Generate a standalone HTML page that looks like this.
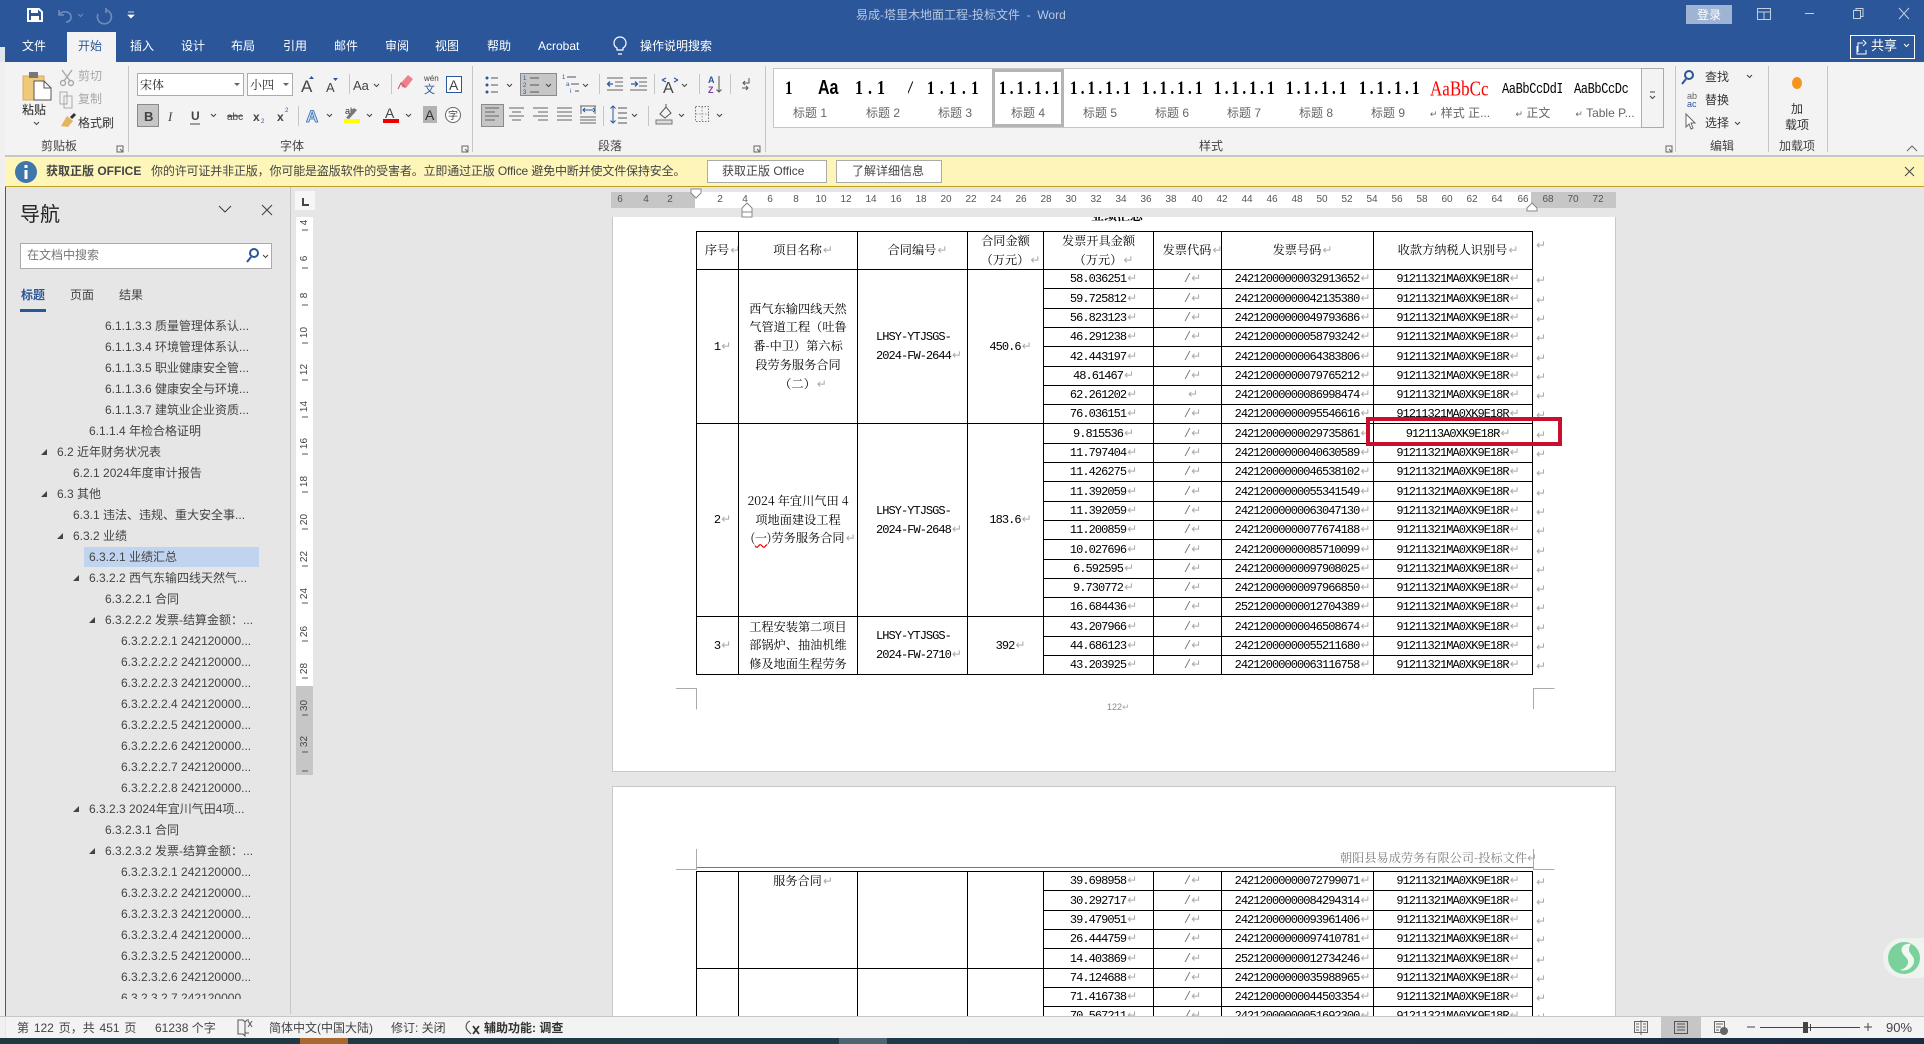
<!DOCTYPE html>
<html lang="zh"><head><meta charset="utf-8"><title>Word</title>
<style>
html,body{margin:0;padding:0;width:1924px;height:1044px;overflow:hidden;background:#e6e6e6}
body{position:relative;font:12px/14px "Liberation Sans","Noto Sans CJK SC",sans-serif;color:#444}
div,span.t{position:absolute}
.t{position:absolute;white-space:nowrap;line-height:14px}
.w{color:#fff}
.n{position:absolute;white-space:nowrap;line-height:16px;color:#444;font-size:12px}
.a{position:absolute;width:0;height:0;border-left:6px solid transparent;border-bottom:6px solid #444}
.r{position:absolute;left:0;top:0;font-size:10px;color:#555;line-height:10px;width:16px;text-align:center}
.v{position:absolute;left:296px;width:17px;text-align:center;font-size:10px;line-height:9px;color:#444;transform:rotate(-90deg)}
.s{position:absolute;white-space:nowrap;overflow:hidden;height:20px;line-height:20px;font:bold 15px/20px "Liberation Serif",serif;color:#000;letter-spacing:3.2px;transform:scaleY(1.25)}
.l{position:absolute;white-space:nowrap;top:106px;line-height:14px;color:#666;text-align:center;width:72px}
table{border-collapse:collapse;table-layout:fixed;position:absolute;background:#fff}
td{border:1px solid #000;padding:1px 0 0;text-align:center;vertical-align:middle;font:12px/15px "Liberation Mono","Noto Serif CJK SC",monospace;letter-spacing:-.96px;color:#000;overflow:hidden;white-space:nowrap}
td.c{font:12.2px/18.7px "Noto Serif CJK SC","Liberation Serif",serif;color:#000;letter-spacing:0;padding:0}
td.h{line-height:18.4px}
td.f{line-height:18.3px}
td.x{text-align:left;padding-left:18px;line-height:19px}
td.e{border:none;text-align:left;padding-left:2px;background:#fff}
td.e i{position:relative;top:2px}
td i{display:inline-block;width:0;overflow:visible;margin-left:1px;font:normal 12px/10px "DejaVu Sans",sans-serif;color:#aaa;letter-spacing:0}
.mk{font:normal 12px/10px "DejaVu Sans",sans-serif;color:#aaa;letter-spacing:0}
td.g{color:#777}
.sep{position:absolute;width:1px;background:#c6c6c6}
.b{position:absolute;background:#fff;border:1px solid #ababab;box-sizing:border-box}
</style></head><body>

<!-- chrome -->
<div style="left:0;top:47px;width:5px;height:991px;background:#f0f0f0"></div>
<div style="left:5px;top:187px;width:1px;height:829px;background:#3d5d80"></div>
<div style="left:0;top:0;width:1924px;height:62px;background:#2b579a"></div>
<div style="left:0;top:47px;width:5px;height:15px;background:#dfe6ee"></div>
<div style="left:67px;top:32px;width:49px;height:30px;background:#f3f3f3"></div>
<div style="left:5px;top:62px;width:1919px;height:95px;background:#f3f3f3"></div>
<div style="left:5px;top:155px;width:1919px;height:2px;background:#c6c6c6"></div>
<div style="left:5px;top:157px;width:1919px;height:29px;background:#fdf6b8"></div>
<div style="left:5px;top:186px;width:1919px;height:1px;background:#c0a020"></div>

<!-- title -->
<span class="t" style="left:856px;top:8px;color:#b9c7df">易成-塔里木地面工程-投标文件&nbsp; -&nbsp; Word</span>
<div style="left:1686px;top:5px;width:46px;height:19px;background:#9fb4d2"></div>
<span class="t w" style="left:1697px;top:8px">登录</span>
<span class="t w" style="left:22px;top:39px">文件</span>
<span class="t" style="left:78px;top:39px;color:#2b579a">开始</span>
<span class="t w" style="left:130px;top:39px">插入</span>
<span class="t w" style="left:181px;top:39px">设计</span>
<span class="t w" style="left:231px;top:39px">布局</span>
<span class="t w" style="left:283px;top:39px">引用</span>
<span class="t w" style="left:334px;top:39px">邮件</span>
<span class="t w" style="left:385px;top:39px">审阅</span>
<span class="t w" style="left:435px;top:39px">视图</span>
<span class="t w" style="left:487px;top:39px">帮助</span>
<span class="t w" style="left:538px;top:39px">Acrobat</span>
<span class="t w" style="left:640px;top:39px">操作说明搜索</span>
<div style="left:1850px;top:35px;width:63px;height:22px;border:1px solid #fff"></div>
<span class="t w" style="left:1871px;top:39px;font-size:13px">共享</span>

<!-- ribbon text -->
<span class="t" style="left:22px;top:103px;color:#222">粘贴</span>
<span class="t" style="left:78px;top:69px;color:#a8a8a8">剪切</span>
<span class="t" style="left:78px;top:92px;color:#a8a8a8">复制</span>
<span class="t" style="left:78px;top:116px;color:#333">格式刷</span>
<span class="t" style="left:41px;top:139px">剪贴板</span>
<span class="t" style="left:280px;top:139px">字体</span>
<span class="t" style="left:598px;top:139px">段落</span>
<span class="t" style="left:1199px;top:139px">样式</span>
<span class="t" style="left:1710px;top:139px">编辑</span>
<span class="t" style="left:1779px;top:139px">加载项</span>
<div class="b" style="left:137px;top:73px;width:107px;height:23px"></div>
<span class="t" style="left:140px;top:78px;color:#222;font-family:'Noto Serif CJK SC',serif">宋体</span>
<div class="b" style="left:247px;top:73px;width:46px;height:23px"></div>
<span class="t" style="left:250px;top:78px;color:#222;font-family:'Noto Serif CJK SC',serif">小四</span>
<div style="left:137px;top:104px;width:22px;height:23px;background:#c6c6c6;border:1px solid #8a8a8a;box-sizing:border-box"></div>
<div style="left:520px;top:73px;width:37px;height:23px;background:#c6c6c6;border:1px solid #8a8a8a;box-sizing:border-box"></div>
<div style="left:481px;top:104px;width:23px;height:23px;background:#c6c6c6;border:1px solid #8a8a8a;box-sizing:border-box"></div>
<div class="sep" style="left:128px;top:66px;height:86px"></div>
<div class="sep" style="left:472px;top:66px;height:86px"></div>
<div class="sep" style="left:765px;top:66px;height:86px"></div>
<div class="sep" style="left:1675px;top:66px;height:86px"></div>
<div class="sep" style="left:1768px;top:66px;height:86px"></div>
<div class="sep" style="left:1827px;top:66px;height:86px"></div>
<div class="sep" style="left:298px;top:106px;height:20px"></div>
<div class="sep" style="left:349px;top:74px;height:20px"></div>
<div class="sep" style="left:391px;top:74px;height:20px"></div>
<div class="sep" style="left:599px;top:74px;height:20px"></div>
<div class="sep" style="left:654px;top:74px;height:20px"></div>
<div class="sep" style="left:699px;top:74px;height:20px"></div>
<div class="sep" style="left:730px;top:74px;height:20px"></div>
<div class="sep" style="left:603px;top:106px;height:20px"></div>
<div class="sep" style="left:648px;top:106px;height:20px"></div>

<!-- styles gallery -->
<div style="left:773px;top:68px;width:891px;height:60px;background:#fff;border:1px solid #c6c6c6;box-sizing:border-box"></div>
<div style="left:1641px;top:68px;width:23px;height:60px;background:#f3f3f3;border:1px solid #ababab;box-sizing:border-box"></div>
<div style="left:992px;top:69px;width:72px;height:58px;border:3px solid #b4b4b4;box-sizing:border-box"></div>
<span class="s" style="left:785px;top:79px;width:12px">1</span>
<span class="s" style="left:818px;top:79px;width:30px;font-size:16px;letter-spacing:0;font-family:'Liberation Sans',sans-serif">Aa</span>
<span class="s" style="left:855px;top:79px;width:34px;letter-spacing:5px;font-size:16px">1.1</span>
<span class="s" style="left:908px;top:79px;width:8px;font-style:italic">/</span>
<span class="s" style="left:927px;top:79px;width:56px;letter-spacing:5.400px">1.1.1</span>
<span class="s" style="left:999px;top:79px;width:60px">1.1.1.1</span>
<span class="s" style="left:1070px;top:79px;width:60px">1.1.1.1</span>
<span class="s" style="left:1142px;top:79px;width:60px">1.1.1.1</span>
<span class="s" style="left:1214px;top:79px;width:60px">1.1.1.1</span>
<span class="s" style="left:1286px;top:79px;width:60px">1.1.1.1</span>
<span class="s" style="left:1359px;top:79px;width:60px">1.1.1.1</span>
<span class="s" style="left:1430px;top:79px;width:59px;color:#f00;font-weight:normal;font-size:17px;letter-spacing:0">AaBbCc</span>
<span class="s" style="left:1502px;top:79px;width:60px;font-size:12px;font-weight:normal;font-family:'Liberation Mono',monospace;letter-spacing:-.4px">AaBbCcDdI</span>
<span class="s" style="left:1574px;top:79px;width:60px;font-size:12px;letter-spacing:-.4px;font-weight:normal;font-family:'Liberation Mono',monospace">AaBbCcDc</span>
<span class="l" style="left:774px">标题 1</span>
<span class="l" style="left:847px">标题 2</span>
<span class="l" style="left:919px">标题 3</span>
<span class="l" style="left:992px">标题 4</span>
<span class="l" style="left:1064px">标题 5</span>
<span class="l" style="left:1136px">标题 6</span>
<span class="l" style="left:1208px">标题 7</span>
<span class="l" style="left:1280px">标题 8</span>
<span class="l" style="left:1352px">标题 9</span>
<span class="l" style="left:1424px"><span style="font-size:9px">↵</span> 样式 正...</span>
<span class="l" style="left:1497px"><span style="font-size:9px">↵</span> 正文</span>
<span class="l" style="left:1569px"><span style="font-size:9px">↵</span> Table P...</span>
<span class="t" style="left:1705px;top:70px;color:#333">查找</span>
<span class="t" style="left:1705px;top:93px;color:#333">替换</span>
<span class="t" style="left:1705px;top:116px;color:#333">选择</span>
<span class="t" style="left:1791px;top:102px;color:#333">加</span>
<span class="t" style="left:1785px;top:118px;color:#333">载项</span>

<!-- message bar -->
<span class="t" style="left:46px;top:164px;color:#444;font-weight:bold">获取正版 OFFICE</span>
<span class="t" style="left:151px;top:164px;color:#444;letter-spacing:-.15px">你的许可证并非正版，你可能是盗版软件的受害者。立即通过正版 Office 避免中断并使文件保持安全。</span>
<div style="left:707px;top:160px;width:120px;height:23px;background:#fff;border:1px solid #ababab;box-sizing:border-box"></div>
<span class="t" style="left:722px;top:164px;color:#444">获取正版 Office</span>
<div style="left:836px;top:160px;width:106px;height:23px;background:#fff;border:1px solid #ababab;box-sizing:border-box"></div>
<span class="t" style="left:852px;top:164px;color:#444">了解详细信息</span>

<!-- nav -->
<div style="left:290px;top:187px;width:1px;height:827px;background:#c6c6c6"></div>
<span class="t" style="left:20px;top:203px;font-size:20px;line-height:24px;color:#222">导航</span>
<div style="left:20px;top:243px;width:252px;height:26px;background:#fff;border:1px solid #ababab;box-sizing:border-box"></div>
<span class="t" style="left:27px;top:248px;color:#777">在文档中搜索</span>
<span class="t" style="left:21px;top:288px;color:#2b579a;font-weight:bold">标题</span>
<span class="t" style="left:70px;top:288px;color:#444">页面</span>
<span class="t" style="left:119px;top:288px;color:#444">结果</span>
<div style="left:20px;top:309px;width:26px;height:3px;background:#2b579a"></div>
<div style="left:84px;top:547px;width:175px;height:20px;background:#c0d3ef"></div>
<div style="left:6px;top:187px;width:284px;height:812px;overflow:hidden">
<div style="left:-6px;top:-186px;width:290px;height:1010px">
<span class="n" style="left:105px;top:317px">6.1.1.3.3 质量管理体系认...</span>
<span class="n" style="left:105px;top:338px">6.1.1.3.4 环境管理体系认...</span>
<span class="n" style="left:105px;top:359px">6.1.1.3.5 职业健康安全管...</span>
<span class="n" style="left:105px;top:380px">6.1.1.3.6 健康安全与环境...</span>
<span class="n" style="left:105px;top:401px">6.1.1.3.7 建筑业企业资质...</span>
<span class="n" style="left:89px;top:422px">6.1.1.4 年检合格证明</span>
<i class="a" style="left:41px;top:448px"></i><span class="n" style="left:57px;top:443px">6.2 近年财务状况表</span>
<span class="n" style="left:73px;top:464px">6.2.1 2024年度审计报告</span>
<i class="a" style="left:41px;top:490px"></i><span class="n" style="left:57px;top:485px">6.3 其他</span>
<span class="n" style="left:73px;top:506px">6.3.1 违法、违规、重大安全事...</span>
<i class="a" style="left:57px;top:532px"></i><span class="n" style="left:73px;top:527px">6.3.2 业绩</span>
<span class="n" style="left:89px;top:548px">6.3.2.1 业绩汇总</span>
<i class="a" style="left:73px;top:574px"></i><span class="n" style="left:89px;top:569px">6.3.2.2 西气东输四线天然气...</span>
<span class="n" style="left:105px;top:590px">6.3.2.2.1 合同</span>
<i class="a" style="left:89px;top:616px"></i><span class="n" style="left:105px;top:611px">6.3.2.2.2 发票-结算金额：...</span>
<span class="n" style="left:121px;top:632px">6.3.2.2.2.1 242120000...</span>
<span class="n" style="left:121px;top:653px">6.3.2.2.2.2 242120000...</span>
<span class="n" style="left:121px;top:674px">6.3.2.2.2.3 242120000...</span>
<span class="n" style="left:121px;top:695px">6.3.2.2.2.4 242120000...</span>
<span class="n" style="left:121px;top:716px">6.3.2.2.2.5 242120000...</span>
<span class="n" style="left:121px;top:737px">6.3.2.2.2.6 242120000...</span>
<span class="n" style="left:121px;top:758px">6.3.2.2.2.7 242120000...</span>
<span class="n" style="left:121px;top:779px">6.3.2.2.2.8 242120000...</span>
<i class="a" style="left:73px;top:805px"></i><span class="n" style="left:89px;top:800px">6.3.2.3 2024年宜川气田4项...</span>
<span class="n" style="left:105px;top:821px">6.3.2.3.1 合同</span>
<i class="a" style="left:89px;top:847px"></i><span class="n" style="left:105px;top:842px">6.3.2.3.2 发票-结算金额：...</span>
<span class="n" style="left:121px;top:863px">6.3.2.3.2.1 242120000...</span>
<span class="n" style="left:121px;top:884px">6.3.2.3.2.2 242120000...</span>
<span class="n" style="left:121px;top:905px">6.3.2.3.2.3 242120000...</span>
<span class="n" style="left:121px;top:926px">6.3.2.3.2.4 242120000...</span>
<span class="n" style="left:121px;top:947px">6.3.2.3.2.5 242120000...</span>
<span class="n" style="left:121px;top:968px">6.3.2.3.2.6 242120000...</span>
<span class="n" style="left:121px;top:989px">6.3.2.3.2.7 242120000...</span>
</div></div>

<!-- rulers -->
<div style="left:295px;top:191px;width:20px;height:19px;background:#f6f6f6"></div>
<div style="left:296px;top:217px;width:17px;height:469px;background:#fff"></div>
<div style="left:296px;top:686px;width:17px;height:89px;background:#c6c6c6"></div>
<div style="left:611px;top:192px;width:84px;height:16px;background:#c6c6c6"></div>
<div style="left:695px;top:192px;width:836px;height:16px;background:#fff"></div>
<div style="left:1531px;top:192px;width:85px;height:16px;background:#c6c6c6"></div>
<div class="r" style="left:612px;top:195px">6</div><div class="r" style="left:638px;top:195px">4</div><div class="r" style="left:662px;top:195px">2</div>
<div class="r" style="left:712px;top:195px">2</div><div class="r" style="left:737px;top:195px">4</div><div class="r" style="left:762px;top:195px">6</div><div class="r" style="left:788px;top:195px">8</div><div class="r" style="left:813px;top:195px">10</div><div class="r" style="left:838px;top:195px">12</div><div class="r" style="left:863px;top:195px">14</div><div class="r" style="left:888px;top:195px">16</div><div class="r" style="left:913px;top:195px">18</div><div class="r" style="left:938px;top:195px">20</div><div class="r" style="left:963px;top:195px">22</div><div class="r" style="left:988px;top:195px">24</div><div class="r" style="left:1013px;top:195px">26</div><div class="r" style="left:1038px;top:195px">28</div><div class="r" style="left:1063px;top:195px">30</div><div class="r" style="left:1088px;top:195px">32</div><div class="r" style="left:1113px;top:195px">34</div><div class="r" style="left:1138px;top:195px">36</div><div class="r" style="left:1163px;top:195px">38</div><div class="r" style="left:1189px;top:195px">40</div><div class="r" style="left:1214px;top:195px">42</div><div class="r" style="left:1239px;top:195px">44</div><div class="r" style="left:1264px;top:195px">46</div><div class="r" style="left:1289px;top:195px">48</div><div class="r" style="left:1314px;top:195px">50</div><div class="r" style="left:1339px;top:195px">52</div><div class="r" style="left:1364px;top:195px">54</div><div class="r" style="left:1389px;top:195px">56</div><div class="r" style="left:1414px;top:195px">58</div><div class="r" style="left:1439px;top:195px">60</div><div class="r" style="left:1464px;top:195px">62</div><div class="r" style="left:1489px;top:195px">64</div><div class="r" style="left:1515px;top:195px">66</div><div class="r" style="left:1540px;top:195px">68</div><div class="r" style="left:1565px;top:195px">70</div><div class="r" style="left:1590px;top:195px">72</div>
<div class="v" style="top:218px">4</div><div class="v" style="top:254px">6</div><div class="v" style="top:291px">8</div><div class="v" style="top:328px">10</div><div class="v" style="top:365px">12</div><div class="v" style="top:402px">14</div><div class="v" style="top:439px">16</div><div class="v" style="top:477px">18</div><div class="v" style="top:515px">20</div><div class="v" style="top:552px">22</div><div class="v" style="top:589px">24</div><div class="v" style="top:627px">26</div><div class="v" style="top:664px">28</div><div class="v" style="top:701px">30</div><div class="v" style="top:737px">32</div>

<!-- document -->
<div style="left:0;top:217px;width:1924px;height:799px;overflow:hidden">
<div style="left:0;top:-217px;width:1924px;height:1040px">
<div style="left:612px;top:150px;width:1004px;height:622px;background:#fff;border:1px solid #c8c8c8;box-sizing:border-box"></div>
<div style="left:612px;top:786px;width:1004px;height:250px;background:#fff;border:1px solid #c8c8c8;box-sizing:border-box"></div>
<span class="t" style="left:1091px;top:207px;font:bold 13px/16px 'Noto Serif CJK SC',serif;color:#000">业绩汇总</span>

<table style="left:696px;top:231px;width:856px">
<colgroup><col style="width:42px"><col style="width:119px"><col style="width:110px"><col style="width:76px"><col style="width:110px"><col style="width:68px"><col style="width:152px"><col style="width:159px"><col style="width:20px"></colgroup>
<tr style="height:38px"><td class="c">序号<i>↵</i></td><td class="c">项目名称<i>↵</i></td><td class="c">合同编号<i>↵</i></td><td class="c h">合同金额<br>（万元）<i>↵</i></td><td class="c h">发票开具金额<br>（万元）<i>↵</i></td><td class="c">发票代码<i>↵</i></td><td class="c">发票号码<i>↵</i></td><td class="c">收款方纳税人识别号<i>↵</i></td><td class="e"><i style="top:-5px">↵</i></td></tr>
<tr style="height:19px"><td rowspan="8">1<i>↵</i></td><td rowspan="8" class="c">西气东输四线天然<br>气管道工程（吐鲁<br>番-中卫）第六标<br>段劳务服务合同<br>（二）<i>↵</i></td><td rowspan="8" class="x">LHSY-YTJSGS-<br>2024-FW-2644<i>↵</i></td><td rowspan="8">450.6<i>↵</i></td><td>58.036251<i>↵</i></td><td class="g">/<i>↵</i></td><td>24212000000032913652<i>↵</i></td><td>91211321MA0XK9E18R<i>↵</i></td><td class="e"><i>↵</i></td></tr>
<tr style="height:20px"><td>59.725812<i>↵</i></td><td class="g">/<i>↵</i></td><td>24212000000042135380<i>↵</i></td><td>91211321MA0XK9E18R<i>↵</i></td><td class="e"><i>↵</i></td></tr>
<tr style="height:19px"><td>56.823123<i>↵</i></td><td class="g">/<i>↵</i></td><td>24212000000049793686<i>↵</i></td><td>91211321MA0XK9E18R<i>↵</i></td><td class="e"><i>↵</i></td></tr>
<tr style="height:19px"><td>46.291238<i>↵</i></td><td class="g">/<i>↵</i></td><td>24212000000058793242<i>↵</i></td><td>91211321MA0XK9E18R<i>↵</i></td><td class="e"><i>↵</i></td></tr>
<tr style="height:20px"><td>42.443197<i>↵</i></td><td class="g">/<i>↵</i></td><td>24212000000064383806<i>↵</i></td><td>91211321MA0XK9E18R<i>↵</i></td><td class="e"><i>↵</i></td></tr>
<tr style="height:19px"><td>48.61467<i>↵</i></td><td class="g">/<i>↵</i></td><td>24212000000079765212<i>↵</i></td><td>91211321MA0XK9E18R<i>↵</i></td><td class="e"><i>↵</i></td></tr>
<tr style="height:19px"><td>62.261202<i>↵</i></td><td class="g"><i>↵</i></td><td>24212000000086998474<i>↵</i></td><td>91211321MA0XK9E18R<i>↵</i></td><td class="e"><i>↵</i></td></tr>
<tr style="height:19px"><td>76.036151<i>↵</i></td><td class="g">/<i>↵</i></td><td>24212000000095546616<i>↵</i></td><td>91211321MA0XK9E18R<i>↵</i></td><td class="e"><i>↵</i></td></tr>
<tr style="height:20px"><td rowspan="10">2<i>↵</i></td><td rowspan="10" class="c">2024 年宜川气田 4<br>项地面建设工程<br>(<span style="text-decoration:underline wavy #e00">一</span>)劳务服务合同<i>↵</i></td><td rowspan="10" class="x">LHSY-YTJSGS-<br>2024-FW-2648<i>↵</i></td><td rowspan="10">183.6<i>↵</i></td><td>9.815536<i>↵</i></td><td class="g">/<i>↵</i></td><td>24212000000029735861<i>↵</i></td><td>912113A0XK9E18R<i>↵</i></td><td class="e"><i>↵</i></td></tr>
<tr style="height:19px"><td>11.797404<i>↵</i></td><td class="g">/<i>↵</i></td><td>24212000000040630589<i>↵</i></td><td>91211321MA0XK9E18R<i>↵</i></td><td class="e"><i>↵</i></td></tr>
<tr style="height:19px"><td>11.426275<i>↵</i></td><td class="g">/<i>↵</i></td><td>24212000000046538102<i>↵</i></td><td>91211321MA0XK9E18R<i>↵</i></td><td class="e"><i>↵</i></td></tr>
<tr style="height:20px"><td>11.392059<i>↵</i></td><td class="g">/<i>↵</i></td><td>24212000000055341549<i>↵</i></td><td>91211321MA0XK9E18R<i>↵</i></td><td class="e"><i>↵</i></td></tr>
<tr style="height:19px"><td>11.392059<i>↵</i></td><td class="g">/<i>↵</i></td><td>24212000000063047130<i>↵</i></td><td>91211321MA0XK9E18R<i>↵</i></td><td class="e"><i>↵</i></td></tr>
<tr style="height:19px"><td>11.200859<i>↵</i></td><td class="g">/<i>↵</i></td><td>24212000000077674188<i>↵</i></td><td>91211321MA0XK9E18R<i>↵</i></td><td class="e"><i>↵</i></td></tr>
<tr style="height:20px"><td>10.027696<i>↵</i></td><td class="g">/<i>↵</i></td><td>24212000000085710099<i>↵</i></td><td>91211321MA0XK9E18R<i>↵</i></td><td class="e"><i>↵</i></td></tr>
<tr style="height:19px"><td>6.592595<i>↵</i></td><td class="g">/<i>↵</i></td><td>24212000000097908025<i>↵</i></td><td>91211321MA0XK9E18R<i>↵</i></td><td class="e"><i>↵</i></td></tr>
<tr style="height:19px"><td>9.730772<i>↵</i></td><td class="g">/<i>↵</i></td><td>24212000000097966850<i>↵</i></td><td>91211321MA0XK9E18R<i>↵</i></td><td class="e"><i>↵</i></td></tr>
<tr style="height:19px"><td>16.684436<i>↵</i></td><td class="g">/<i>↵</i></td><td>25212000000012704389<i>↵</i></td><td>91211321MA0XK9E18R<i>↵</i></td><td class="e"><i>↵</i></td></tr>
<tr style="height:20px"><td rowspan="3">3<i>↵</i></td><td rowspan="3" class="c f">工程安装第二项目<br>部锅炉、抽油机维<br>修及地面生程劳务</td><td rowspan="3" class="x">LHSY-YTJSGS-<br>2024-FW-2710<i>↵</i></td><td rowspan="3">392<i>↵</i></td><td>43.207966<i>↵</i></td><td class="g">/<i>↵</i></td><td>24212000000046508674<i>↵</i></td><td>91211321MA0XK9E18R<i>↵</i></td><td class="e"><i>↵</i></td></tr>
<tr style="height:19px"><td>44.686123<i>↵</i></td><td class="g">/<i>↵</i></td><td>24212000000055211680<i>↵</i></td><td>91211321MA0XK9E18R<i>↵</i></td><td class="e"><i>↵</i></td></tr>
<tr style="height:19px"><td>43.203925<i>↵</i></td><td class="g">/<i>↵</i></td><td>24212000000063116758<i>↵</i></td><td>91211321MA0XK9E18R<i>↵</i></td><td class="e"><i>↵</i></td></tr>
</table>

<div style="left:1366px;top:417px;width:196px;height:29px;border:4px solid #c8102e;box-sizing:border-box"></div>
<span class="t" style="left:1107px;top:700px;font-size:9px;color:#888">122<span class="mk" style="font-size:9px">↵</span></span>

<span class="t" style="left:1340px;top:851px;font:12.2px/14px 'Noto Serif CJK SC',serif;color:#808080">朝阳县易成劳务有限公司-投标文件<span class="mk">↵</span></span>
<div style="left:696px;top:867px;width:838px;height:1px;background:#777"></div>

<table style="left:696px;top:871px;width:856px">
<colgroup><col style="width:42px"><col style="width:119px"><col style="width:110px"><col style="width:76px"><col style="width:110px"><col style="width:68px"><col style="width:152px"><col style="width:159px"><col style="width:20px"></colgroup>
<tr style="height:19px"><td rowspan="5"></td><td rowspan="5" class="c" style="vertical-align:top">服务合同<i>↵</i></td><td rowspan="5"></td><td rowspan="5"></td><td>39.698958<i>↵</i></td><td class="g">/<i>↵</i></td><td>24212000000072799071<i>↵</i></td><td>91211321MA0XK9E18R<i>↵</i></td><td class="e"><i>↵</i></td></tr>
<tr style="height:20px"><td>30.292717<i>↵</i></td><td class="g">/<i>↵</i></td><td>24212000000084294314<i>↵</i></td><td>91211321MA0XK9E18R<i>↵</i></td><td class="e"><i>↵</i></td></tr>
<tr style="height:19px"><td>39.479051<i>↵</i></td><td class="g">/<i>↵</i></td><td>24212000000093961406<i>↵</i></td><td>91211321MA0XK9E18R<i>↵</i></td><td class="e"><i>↵</i></td></tr>
<tr style="height:19px"><td>26.444759<i>↵</i></td><td class="g">/<i>↵</i></td><td>24212000000097410781<i>↵</i></td><td>91211321MA0XK9E18R<i>↵</i></td><td class="e"><i>↵</i></td></tr>
<tr style="height:20px"><td>14.403869<i>↵</i></td><td class="g">/<i>↵</i></td><td>25212000000012734246<i>↵</i></td><td>91211321MA0XK9E18R<i>↵</i></td><td class="e"><i>↵</i></td></tr>
<tr style="height:19px"><td rowspan="3"></td><td rowspan="3"></td><td rowspan="3"></td><td rowspan="3"></td><td>74.124688<i>↵</i></td><td class="g">/<i>↵</i></td><td>24212000000035988965<i>↵</i></td><td>91211321MA0XK9E18R<i>↵</i></td><td class="e"><i>↵</i></td></tr>
<tr style="height:19px"><td>71.416738<i>↵</i></td><td class="g">/<i>↵</i></td><td>24212000000044503354<i>↵</i></td><td>91211321MA0XK9E18R<i>↵</i></td><td class="e"><i>↵</i></td></tr>
<tr style="height:19px"><td>70.567211<i>↵</i></td><td class="g">/<i>↵</i></td><td>24212000000051692300<i>↵</i></td><td>91211321MA0XK9E18R<i>↵</i></td><td class="e"><i>↵</i></td></tr>
</table>
</div></div>

<div style="left:1883px;top:938px;width:41px;height:40px;background:#eef3ef;border-radius:20px 0 0 20px"></div>

<!-- status bar -->
<div style="left:0;top:1016px;width:1924px;height:1px;background:#c6c6c6"></div>
<div style="left:6px;top:1017px;width:1918px;height:21px;background:#f3f3f3"></div>
<div style="left:1661px;top:1016px;width:40px;height:22px;background:#c6c6c6"></div>
<div style="left:0;top:1038px;width:1924px;height:6px;background:linear-gradient(90deg,#20383f 0,#1f3a48 45%,#1e3446 70%,#1a2a40 100%)"></div>
<div style="left:300px;top:1038px;width:48px;height:6px;background:#a8692e"></div>
<div style="left:839px;top:1038px;width:48px;height:6px;background:#4f6470"></div>
<span class="t" style="left:17px;top:1021px;word-spacing:1.500px">第 122 页，共 451 页</span>
<span class="t" style="left:155px;top:1021px">61238 个字</span>
<span class="t" style="left:269px;top:1021px">简体中文(中国大陆)</span>
<span class="t" style="left:391px;top:1021px">修订: 关闭</span>
<span class="t" style="left:484px;top:1021px;font-weight:bold;color:#333">辅助功能: 调查</span>
<span class="t" style="left:1886px;top:1021px;font-size:13px">90%</span>

<!-- icons -->
<svg style="position:absolute;left:0;top:0" width="1924" height="1044" viewBox="0 0 1924 1044" fill="none">
<!-- QAT -->
<path d="M28 9h11l3 3v9H28z" stroke="#fff" stroke-width="2"/><rect x="31" y="9" width="7" height="4" fill="#fff"/><rect x="31" y="16" width="8" height="5" fill="#fff"/>
<g stroke="#6f8dbc" stroke-width="1.600"><path d="M59 10v5h5M59 15c3-5 12-4 12 2 0 3-2 5-5 5"/><path d="M78 14l2.500 2.500 2.500-2.500" stroke-width="1"/><path d="M98 14a7 7 0 1 0 8-4M106 8v5"/></g>
<path d="M128 12h6M128 15h6l-3 3z" fill="#fff" stroke="#fff" stroke-width=".7"/>
<!-- window -->
<g stroke="#c3d0e4" stroke-width="1"><rect x="1757.500" y="8.500" width="13" height="11"/><path d="M1757 12h14M1764 12v7M1805 13.500h9"/><rect x="1853.500" y="10.500" width="7" height="8"/><path d="M1856 10V8.500h7v8h-2"/><path d="M1899 8l10 11M1909 8l-10 11"/></g>
<!-- share + bulb -->
<path d="M1858 52V43h5M1863 40l3 3-3 3M1857 46v8h9v-4" stroke="#fff"/><path d="M1904 44l2.500 2.500 2.500-2.500" stroke="#fff"/>
<path d="M617 50v-2c-2-1-3-3-3-5a6 6 0 0 1 12 0c0 2-1 4-3 5v2zM618 54h4" stroke="#fff" stroke-width="1.200"/>
<!-- clipboard -->
<path d="M23 76h21v24H23z" fill="#f0c87a" stroke="#d6ab5f"/><path d="M29 72h9v6h-9z" fill="#777"/><path d="M34 81h10l7 7v12H34z" fill="#fff" stroke="#555"/><path d="M44 81v7h7" stroke="#555"/>
<path d="M34 122l2.500 2.500 2.500-2.500" stroke="#444"/>
<g stroke="#a8a8a8" stroke-width="1.400"><path d="M62 70l8 11M72 70l-8 11"/><circle cx="63" cy="83" r="2.500"/><circle cx="71" cy="83" r="2.500"/><path d="M60 92h7v12h-7zM64 96h8v12h-8z" fill="#f3f3f3" stroke-width="1"/></g>
<path d="M67 116l6 5-5 6-7-1z" fill="#e3b45c"/><path d="M71 118l4-4" stroke="#333" stroke-width="3"/>
<!-- dialog launchers -->
<g stroke="#666"><path d="M117 146h6v6h-6zM120 149l3 3"/><path d="M462 146h6v6h-6zM465 149l3 3"/><path d="M754 146h6v6h-6zM757 149l3 3"/><path d="M1666 146h6v6h-6zM1669 149l3 3"/><path d="M1907 151l5-5 5 5"/></g>
<!-- dropdown arrows -->
<g fill="#666"><path d="M234 83h6l-3 3zM283 83h6l-3 3z"/></g>
<g stroke="#444"><path d="M374 84l2.500 2.500 2.500-2.500M507 84l2.500 2.500 2.500-2.500M546 84l2.500 2.500 2.500-2.500M583 84l2.500 2.500 2.500-2.500M682 84l2.500 2.500 2.500-2.500M211 114l2.500 2.500 2.500-2.500M327 114l2.500 2.500 2.500-2.500M367 114l2.500 2.500 2.500-2.500M406 114l2.500 2.500 2.500-2.500M632 114l2.500 2.500 2.500-2.500M679 114l2.500 2.500 2.500-2.500M717 114l2.500 2.500 2.500-2.500M1747 75l2.500 2.500 2.500-2.500M1735 122l2.500 2.500 2.500-2.500M1650 96l2.500 2.500 2.500-2.500"/><path d="M1650 92h5" /></g>
<!-- font row 1 -->
<g font-family="Liberation Sans,sans-serif" fill="#444">
<text x="301" y="92" font-size="17">A</text><path d="M309 79l2.500-3 2.500 3z" fill="#2b579a"/>
<text x="326" y="92" font-size="13">A</text><path d="M333 78h5l-2.500 3z" fill="#2b579a"/>
<text x="353" y="90" font-size="13">Aa</text>
<text x="424" y="81" font-size="8">wén</text><text x="424" y="93" font-size="11" fill="#2b579a" font-family="Noto Sans CJK SC">文</text>
<rect x="446.500" y="76.500" width="15" height="16" stroke="#2b579a" fill="#fff"/><text x="449" y="90" font-size="14">A</text>
<text x="144" y="121" font-size="13" font-weight="bold">B</text>
<text x="168" y="121" font-size="13" font-style="italic" font-family="Liberation Serif">I</text>
<text x="191" y="120" font-size="12" font-weight="bold">U</text><path d="M190 124h10" stroke="#444"/>
<text x="227" y="120" font-size="10">abc</text><path d="M227 116h16" stroke="#444"/>
<text x="253" y="121" font-size="12" font-weight="bold">x</text><text x="261" y="123" font-size="6" fill="#2b579a">2</text>
<text x="277" y="121" font-size="12" font-weight="bold">x</text><text x="285" y="112" font-size="6" fill="#2b579a">2</text>
<text x="306" y="122" font-size="17" font-weight="bold" fill="#cfe0f5" stroke="#2b6cb5" stroke-width=".8">A</text>
<text x="345" y="114" font-size="9" fill="#333">ab</text><path d="M346 118l8-10 3 2-8 9z" fill="#777"/><rect x="344" y="119" width="16" height="4" fill="#ff0"/>
<text x="385" y="118" font-size="14">A</text><rect x="383" y="119" width="16" height="4" fill="#e00"/>
<rect x="423" y="106" width="14" height="17" fill="#b3b3b3"/><text x="425" y="120" font-size="14" fill="#333">A</text>
<circle cx="453" cy="115" r="7.500" stroke="#666" fill="#fff"/><text x="448" y="119" font-size="10" font-family="Noto Sans CJK SC">字</text>
</g>
<path d="M401 83l7-8 5 4-7 9-4-1z" fill="#ef7f8f"/><path d="M398 89l3-6 4 4" stroke="#b55" />
<!-- paragraph row 1 -->
<g stroke="#555"><path d="M491 78h7M491 85h7M491 92h7"/></g><g fill="#2b579a"><circle cx="487" cy="78" r="1.500"/><circle cx="487" cy="85" r="1.500"/><circle cx="487" cy="92" r="1.500"/></g>
<g stroke="#555"><path d="M530 78h9M530 85h9M530 92h9"/></g><g fill="#2b579a" font-size="6" font-family="Liberation Sans"><text x="523" y="80">1</text><text x="523" y="87">2</text><text x="523" y="94">3</text></g>
<g stroke="#555"><path d="M567 77h9M571 84h8M575 91h4"/></g><g fill="#2b579a" font-size="6" font-family="Liberation Sans"><text x="562" y="79">1</text><text x="566" y="86">a</text><text x="570" y="93">i</text></g>
<g stroke="#666"><path d="M607 78h16M615 82h8M615 86h8M607 90h16"/><path d="M630 78h17M630 90h17M639 82h8M639 86h8"/></g>
<path d="M613 84h-5m2-2.500l-2.500 2.500 2.500 2.500M631 84h6m-2-2.500l2.500 2.500-2.500 2.500" stroke="#2b579a" stroke-width="1.300"/>
<text x="663" y="93" font-size="16" fill="#444" font-family="Liberation Sans">A</text><path d="M662 80l4-2M678 80l-4-2M662 80l4 2M678 80l-4 2" stroke="#2b579a" stroke-width="1.200"/>
<text x="708" y="83" font-size="9" fill="#2b579a" font-family="Liberation Sans" font-weight="bold">A</text><text x="708" y="93" font-size="9" fill="#7a3fa0" font-family="Liberation Sans" font-weight="bold">Z</text><path d="M719 76v16m-2.500-2.500l2.500 2.500 2.500-2.500" stroke="#555"/>
<path d="M749 78v5h-6m2-2l-2 2 2 2M742 88h6m-2-2l2 2-2 2" stroke="#555"/>
<!-- align row -->
<g stroke="#666" stroke-width="1"><path d="M485 108h14M485 112h10M485 116h14M485 120h10M509 108h15M512 112h9M509 116h15M512 120h9M533 108h15M538 112h10M533 116h15M538 120h10M557 108h15M557 112h15M557 116h15M557 120h15"/><path d="M580 106h16M580 120h16M580 123h16M580 117h16M581 106v8M595 106v8"/><path d="M583 110h10m-8-2l-2 2 2 2m8-4l2 2-2 2" stroke="#2b579a"/></g>
<g stroke="#555"><path d="M618 108h9M618 113h9M618 118h9M618 123h9"/></g><path d="M613 106v17m-2.500-14.500l2.500-2.500 2.500 2.500m-5 12l2.500 2.500 2.500-2.500" stroke="#2b579a"/>
<path d="M660 114l6-7 5 6-6 5zM666 107v-3" stroke="#555"/><rect x="656" y="120" width="16" height="4" fill="#ddd" stroke="#777"/>
<rect x="695.500" y="106.500" width="13" height="15" stroke="#777" stroke-dasharray="1.500 1.500"/><path d="M696 114h13M702 107v14" stroke="#999" stroke-dasharray="1.500 1.500"/>
<!-- edit -->
<circle cx="1689" cy="75" r="4" stroke="#2b579a" stroke-width="2"/><path d="M1686 79l-4 5" stroke="#2b579a" stroke-width="2"/>
<text x="1687" y="99" font-size="9" fill="#666" font-family="Liberation Sans">ab</text><text x="1687" y="107" font-size="9" fill="#2b579a" font-family="Liberation Sans">ac</text>
<path d="M1692 115v13l3-3 2 5 2-1-2-5h4z" stroke="#666" fill="#fff" transform="translate(-6,-1)"/>
<ellipse cx="1797" cy="83" rx="5" ry="6" fill="#f7941d"/>
<!-- msg bar -->
<circle cx="26" cy="172" r="11" fill="#3f77ad"/><rect x="24.500" y="170" width="3" height="9" fill="#fff"/><rect x="24.500" y="165" width="3" height="3" fill="#fff"/>
<path d="M1905 167l9 9M1914 167l-9 9" stroke="#444"/>
<!-- nav icons -->
<path d="M219 206l6 6 6-6M262 205l10 10M272 205l-10 10" stroke="#444" stroke-width="1.100"/>
<circle cx="254" cy="253" r="4" stroke="#2b579a" stroke-width="2"/><path d="M251 257l-4 5" stroke="#2b579a" stroke-width="2"/><path d="M263 255l2.500 2.500 2.500-2.500" stroke="#444"/>
<path d="M303 198v7h6" stroke="#444" stroke-width="2"/>
<!-- vruler ticks -->
<g stroke="#555"><path d="M302 230h6M302 268h6M302 305h6M302 343h6M302 380h6M302 417h6M302 454h6M302 492h6M302 529h6M302 566h6M302 603h6M302 641h6M302 678h6M302 715h6M302 752h6M302 771h6"/></g>
<!-- ruler markers -->
<path d="M691 189h10v4l-5 5-5-5z" fill="#fff" stroke="#888"/>
<path d="M747 203l5 5v9h-10v-9zM742 212h10" fill="#fff" stroke="#888"/>
<path d="M1532 203l5 5v3h-10v-3z" fill="#fff" stroke="#888"/>
<!-- crop marks -->
<g stroke="#aaa"><path d="M676 688.500h20.500v21M1533.500 709v-20.500h21"/></g>
<g stroke="#aaa"><path d="M696.500 849v20.500H676M1533.500 849v20.500h21"/></g>
<!-- green logo -->
<circle cx="1904" cy="958" r="16" fill="#7bd19b"/><path d="M1911 944c-7-1-11 3-9 8 2 5 7 6 6 11-1 4-4 6-8 7 6 2 13-2 14-8 1-6-5-8-5-12 0-3 1-5 2-6z" fill="#f1f8f2"/>
<!-- status icons -->
<path d="M238 1020h5l2 2v14l-2-2h-5zM245 1022l2-2h2M249 1033h-4" stroke="#555"/><path d="M248 1021l4 6M252 1021l-4 6" stroke="#555"/>
<path d="M470 1021a6 6 0 0 0-2 10l3 3" stroke="#555" stroke-width="1.200"/><path d="M473 1026l6 8M479 1026l-6 8" stroke="#333" stroke-width="1.800"/>
<path d="M1634.500 1021.500h13v11h-13zM1641 1020v15M1636 1024h3M1636 1027h3M1636 1030h3M1643 1024h3M1643 1027h3M1643 1030h3" stroke="#666"/>
<path d="M1674.500 1021.500h13v12h-13zM1677 1024h8M1677 1027h8M1677 1030h8" stroke="#555"/>
<path d="M1714.500 1021.500h10v11h-10zM1716 1024h7M1716 1027h5M1716 1030h3" stroke="#666"/><circle cx="1724" cy="1031" r="4" fill="#666"/>
<path d="M1747 1027h8M1864 1027h8M1868 1023v8M1760 1027.500h100M1810.500 1024v7" stroke="#444"/>
<rect x="1803" y="1022" width="5" height="11" fill="#444"/>
</svg>
</body></html>
